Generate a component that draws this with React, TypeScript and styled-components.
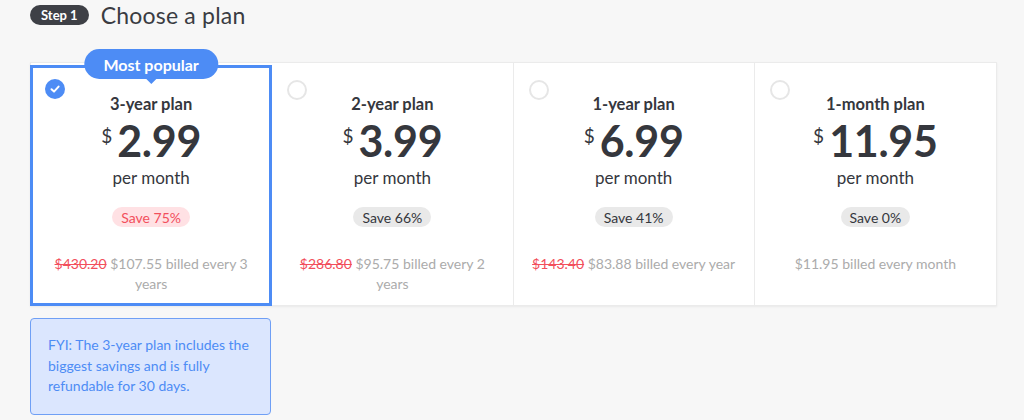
import React from "react";
import styled, { createGlobalStyle } from "styled-components";

const Global = createGlobalStyle`
  html, body { margin: 0; padding: 0; background: #f7f7f7; }
  body { font-family: "Lato", "Noto Sans", sans-serif; color: #35373d; }
  * { box-sizing: border-box; }
`;

const Page = styled.div`
  width: 1024px;
  height: 420px;
  padding: 3px 27px 0 30px;
  overflow: hidden;
`;

const Header = styled.div`
  display: flex;
  align-items: center;
  gap: 12px;
  height: 24px;
`;

const StepBadge = styled.span`
  display: inline-flex;
  align-items: center;
  justify-content: center;
  height: 20px;
  padding: 0 11px;
  border-radius: 10px;
  background: #3e4046;
  color: #fff;
  font-size: 13px;
  font-weight: 700;
`;

const Title = styled.h1`
  margin: 0;
  font-size: 23px;
  font-weight: 400;
  color: #3a3c42;
  letter-spacing: 0.2px;
`;

const Plans = styled.div`
  margin-top: 35px;
  display: grid;
  grid-template-columns: repeat(4, 1fr);
  background: #fff;
  border: 1px solid #ebebeb;
  box-shadow: 0 1px 2px rgba(0, 0, 0, 0.06);
  height: 244px;
`;

const Card = styled.div<{ $selected?: boolean; $last?: boolean }>`
  position: relative;
  display: flex;
  flex-direction: column;
  align-items: center;
  padding: ${(p) => (p.$selected ? "26px 16px 0" : "31px 18px 0")};
  border-right: ${(p) => (p.$last ? "none" : "1px solid #ebebeb")};
  ${(p) =>
    p.$selected
      ? `border: 3px solid #4d8cf5; margin: 2px 0 -1px -1px;`
      : ""}
`;

const Popular = styled.div`
  position: absolute;
  top: -19px;
  left: 50%;
  transform: translateX(-50%);
  height: 30px;
  padding: 0 19px;
  border-radius: 15px;
  background: #4d8cf5;
  color: #fff;
  font-size: 16px;
  font-weight: 700;
  display: flex;
  align-items: center;
  white-space: nowrap;
  &::after {
    content: "";
    position: absolute;
    left: 50%;
    bottom: -5px;
    transform: translateX(-50%);
    border-left: 5px solid transparent;
    border-right: 5px solid transparent;
    border-top: 5px solid #4d8cf5;
  }
`;

const Radio = styled.span<{ $checked?: boolean }>`
  position: absolute;
  top: ${(p) => (p.$checked ? "11px" : "17px")};
  left: ${(p) => (p.$checked ? "12px" : "15px")};
  width: 20px;
  height: 20px;
  border-radius: 50%;
  display: flex;
  align-items: center;
  justify-content: center;
  ${(p) =>
    p.$checked
      ? "background: #4d8cf5;"
      : "border: 2px solid #e6e6e6; background: #fff;"}
`;

const PlanName = styled.div`
  font-size: 16.5px;
  font-weight: 700;
  line-height: 20px;
  color: #35373d;
`;

const PriceRow = styled.div`
  display: flex;
  align-items: flex-start;
  margin-top: 3px;
  color: #35373d;
`;

const Currency = styled.span`
  font-size: 19px;
  font-weight: 400;
  line-height: 18px;
  margin-top: 10px;
  margin-right: 5px;
`;

const Amount = styled.span`
  font-size: 43px;
  font-weight: 700;
  line-height: 48px;
  letter-spacing: -0.3px;
`;

const PerMonth = styled.div`
  font-size: 17px;
  line-height: 20px;
  margin-top: 3px;
  color: #35373d;
`;

const Save = styled.span<{ $hot?: boolean }>`
  margin-top: 19px;
  height: 20px;
  padding: 0 9px;
  border-radius: 10px;
  font-size: 14px;
  display: inline-flex;
  align-items: center;
  background: ${(p) => (p.$hot ? "#ffe1e4" : "#e9e9e9")};
  color: ${(p) => (p.$hot ? "#f24f5c" : "#35373d")};
`;

const Billing = styled.div`
  margin-top: 27px;
  font-size: 14px;
  line-height: 20px;
  color: #ababab;
  text-align: center;
`;

const Old = styled.s`
  color: #f24f5c;
`;

const Note = styled.div`
  margin-top: 12px;
  width: 241px;
  height: 97px;
  padding: 16px 17px;
  background: #dbe6fe;
  border: 1px solid #6f9ff5;
  border-radius: 4px;
  color: #4d8cf5;
  font-size: 14px;
  line-height: 20.5px;
`;

type Plan = {
  name: string;
  price: string;
  save: string;
  old?: string;
  billed: string;
};

const plans: Plan[] = [
  { name: "3-year plan", price: "2.99", save: "Save 75%", old: "$430.20", billed: "$107.55 billed every 3 years" },
  { name: "2-year plan", price: "3.99", save: "Save 66%", old: "$286.80", billed: "$95.75 billed every 2 years" },
  { name: "1-year plan", price: "6.99", save: "Save 41%", old: "$143.40", billed: "$83.88 billed every year" },
  { name: "1-month plan", price: "11.95", save: "Save 0%", billed: "$11.95 billed every month" },
];

const Check = () => (
  <svg width="12" height="12" viewBox="0 0 12 12" fill="none">
    <path d="M2.5 6.3 L5 8.6 L9.6 3.6" stroke="#fff" strokeWidth="2" strokeLinecap="round" strokeLinejoin="round" />
  </svg>
);

export default function App() {
  return (
    <>
      <Global />
      <Page>
        <Header>
          <StepBadge>Step 1</StepBadge>
          <Title>Choose a plan</Title>
        </Header>
        <Plans>
          {plans.map((p, i) => {
            const sel = i === 0;
            return (
              <Card key={p.name} $selected={sel} $last={i === plans.length - 1}>
                {sel && <Popular>Most popular</Popular>}
                <Radio $checked={sel}>{sel && <Check />}</Radio>
                <PlanName>{p.name}</PlanName>
                <PriceRow>
                  <Currency>$</Currency>
                  <Amount>{p.price}</Amount>
                </PriceRow>
                <PerMonth>per month</PerMonth>
                <Save $hot={sel}>{p.save}</Save>
                <Billing>
                  {p.old && <Old>{p.old}</Old>}
                  {p.old ? " " : ""}
                  {p.billed}
                </Billing>
              </Card>
            );
          })}
        </Plans>
        <Note>FYI: The 3-year plan includes the biggest savings and is fully refundable for 30 days.</Note>
      </Page>
    </>
  );
}
